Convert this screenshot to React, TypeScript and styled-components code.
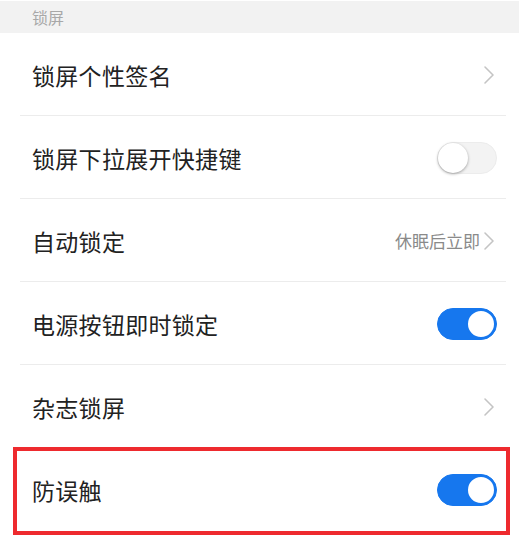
import React from "react";
import styled, { createGlobalStyle, css } from "styled-components";

const GlobalStyle = createGlobalStyle`
  html, body {
    margin: 0;
    padding: 0;
    background: #ffffff;
  }
  body {
    font-family: "Noto Sans CJK SC", "Noto Sans", sans-serif;
  }
`;

const Screen = styled.div`
  width: 520px;
  height: 557px;
  background: #ffffff;
  overflow: hidden;
`;

const SectionHeader = styled.div`
  height: 32px;
  margin-top: 1px;
  margin-right: 1px;
  background: #f2f2f2;
  display: flex;
  align-items: center;
  padding-left: 32px;
  font-size: 16px;
  color: #a8a8a8;
`;

const Row = styled.div<{ $divider?: boolean; $highlight?: boolean }>`
  position: relative;
  height: 83px;
  display: flex;
  align-items: center;
  justify-content: space-between;
  padding: 0 25px 0 32px;
  box-sizing: border-box;

  ${(p) =>
    p.$divider &&
    css`
      &::before {
        content: "";
        position: absolute;
        left: 20px;
        right: 14px;
        bottom: 0;
        height: 1px;
        background: #ececec;
      }
    `}

  ${(p) =>
    p.$highlight &&
    css`
      &::after {
        content: "";
        position: absolute;
        left: 13px;
        right: 10px;
        top: -1px;
        bottom: -4px;
        border: 4px solid #ee2a2e;
        pointer-events: none;
      }
    `}
`;

const Label = styled.span`
  font-size: 23px;
  color: #222222;
  letter-spacing: 0.3px;
`;

const Trailing = styled.div`
  display: flex;
  align-items: center;
  gap: 3px;
`;

const Value = styled.span`
  font-size: 17px;
  color: #8a8a8a;
`;

const Track = styled.div<{ $on: boolean }>`
  position: relative;
  width: 60px;
  height: 32px;
  border-radius: 16px;
  box-sizing: border-box;
  margin-right: -2px;
  background: ${(p) => (p.$on ? "#1677ee" : "#f3f3f3")};
  border: 1px solid ${(p) => (p.$on ? "#1677ee" : "#ececec")};
`;

const Knob = styled.div<{ $on: boolean }>`
  position: absolute;
  top: 0px;
  width: 30px;
  height: 30px;
  border-radius: 50%;
  box-sizing: border-box;
  background: #ffffff;
  ${(p) =>
    p.$on
      ? css`
          right: 0;
          border: 2px solid #1677ee;
        `
      : css`
          left: 0;
          box-shadow: 0 1px 3px rgba(0, 0, 0, 0.35);
        `}
`;

const Chevron = () => (
  <svg width="12" height="20" viewBox="0 0 12 20">
    <path
      d="M2 2 L10 10 L2 18"
      fill="none"
      stroke="#c4c4c4"
      strokeWidth="1.6"
      strokeLinecap="round"
      strokeLinejoin="round"
    />
  </svg>
);

const Switch = ({ on }: { on: boolean }) => (
  <Track $on={on}>
    <Knob $on={on} />
  </Track>
);

type Item = {
  label: string;
  kind: "link" | "switch";
  value?: string;
  on?: boolean;
  highlight?: boolean;
};

const items: Item[] = [
  { label: "锁屏个性签名", kind: "link" },
  { label: "锁屏下拉展开快捷键", kind: "switch", on: false },
  { label: "自动锁定", kind: "link", value: "休眠后立即" },
  { label: "电源按钮即时锁定", kind: "switch", on: true },
  { label: "杂志锁屏", kind: "link" },
  { label: "防误触", kind: "switch", on: true, highlight: true },
];

export default function App() {
  return (
    <Screen>
      <GlobalStyle />
      <SectionHeader>锁屏</SectionHeader>
      {items.map((item, i) => (
        <Row
          key={item.label}
          $divider={i < items.length - 1}
          $highlight={item.highlight}
        >
          <Label>{item.label}</Label>
          <Trailing>
            {item.value && <Value>{item.value}</Value>}
            {item.kind === "link" ? <Chevron /> : <Switch on={!!item.on} />}
          </Trailing>
        </Row>
      ))}
    </Screen>
  );
}
